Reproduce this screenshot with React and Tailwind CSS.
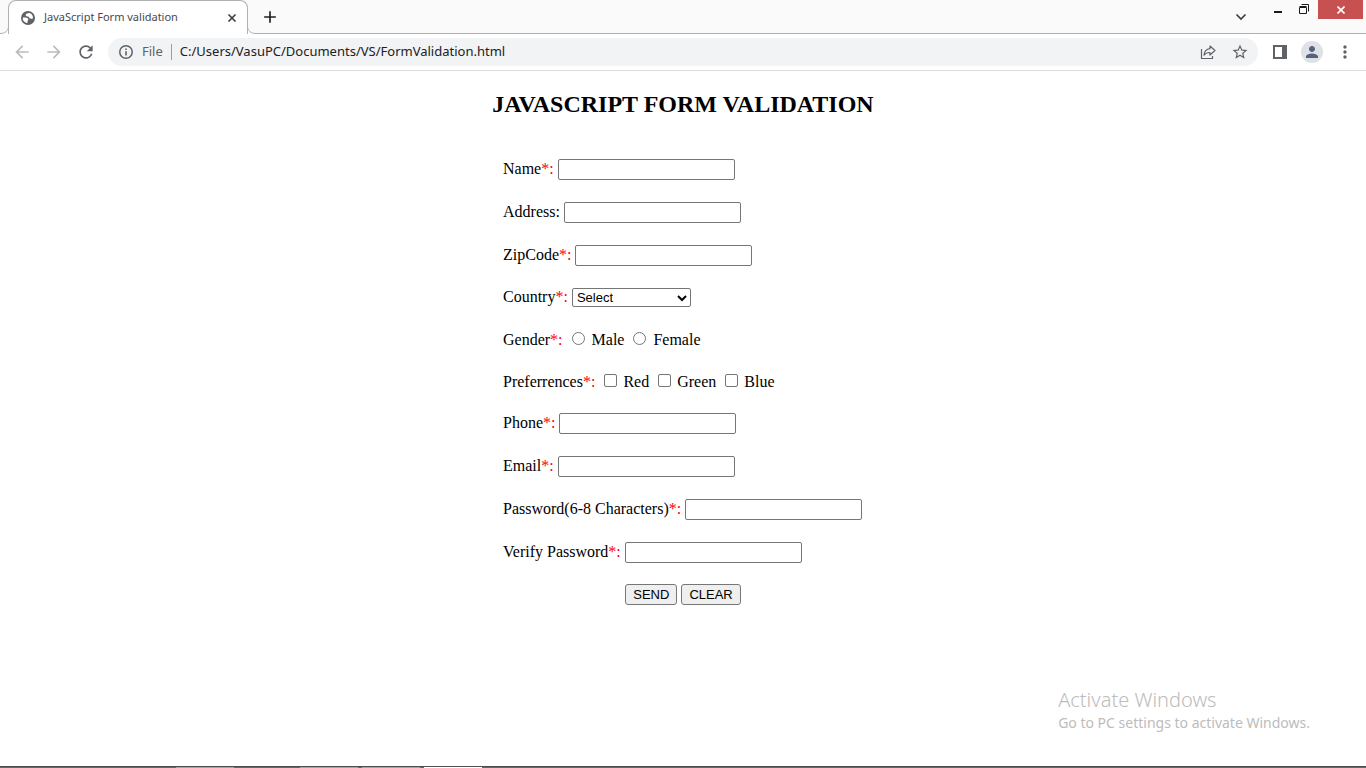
import React from "react";
import { MdArrowBack, MdArrowForward, MdRefresh, MdStarBorder, MdPerson, MdMoreVert, MdAdd } from "react-icons/md";

const UI = "font-['Noto_Sans','Open_Sans',sans-serif]";

function GlobeIcon() {
  return (
    <svg width="16" height="16" viewBox="0 0 16 16" aria-hidden="true">
      <circle cx="8" cy="8" r="7" fill="#5f6368" />
      <path d="M9.500 3C7.500 2.800 5.600 3.800 5.700 5.200c.1 1.200 1.600 1.100 2.500 1.400 1 .4.800 1.700 1.800 2 1.100.3 2.200.1 3-.4A5.300 5.300 0 0 0 9.500 3zM2.800 7.600c1.500-.1 3.200 0 4.400.5 1.300.5 1.500 1.700.7 2.400-.6.500-.4 1.200-.3 1.800.1.500-.2.800-.7.700A5.200 5.200 0 0 1 2.800 7.600z" fill="#fff" />
    </svg>
  );
}

function InfoIcon() {
  return (
    <svg width="16" height="16" viewBox="0 0 16 16" aria-hidden="true">
      <circle cx="8" cy="8" r="6.250" fill="none" stroke="#5f6368" strokeWidth="1.500" />
      <path d="M7.200 4.500h1.600v1.600H7.200zM7.200 7.200h1.600v4.300H7.200z" fill="#5f6368" />
    </svg>
  );
}

function ShareIcon() {
  return (
    <svg width="16" height="16" viewBox="0 0 16 16" fill="none" stroke="#5f6368" strokeWidth="1.200" aria-hidden="true">
      <path d="M1.500 5v9.500h11V12" />
      <path d="M10 2l5 4.500-5 4.500V8.500C7.500 8.400 5.500 9.200 4 11.200c.3-3.500 2.500-6.200 6-6.600z" strokeLinejoin="round" />
    </svg>
  );
}

function TabFlare({ flip }) {
  return (
    <svg width="8" height="34" viewBox="0 0 8 34" className={flip ? "-scale-x-100" : ""} aria-hidden="true">
      <path d="M0 33.500C5 33.500 8 31 8 26V34H0z" fill="#fff" />
      <path d="M0 33.500C5 33.500 8.500 31 8.500 26" fill="none" stroke="#b0b0b0" />
    </svg>
  );
}

function Star() {
  return <span className="text-[#ff0000]">*:</span>;
}

function TextRow({ id, label, required = true, type = "text" }) {
  return (
    <div className="flex h-[21px] items-center gap-1">
      <label htmlFor={id} className="pb-0.5">
        {label}
        {required ? <Star /> : ":"}
      </label>
      <input id={id} type={type} className="h-[21px] w-[177px] rounded-[2px] border border-[#767676] bg-white px-1 font-['Liberation_Sans',sans-serif] text-[13px]" />
    </div>
  );
}

function Choice({ type, name, label }) {
  const shape = type === "radio" ? "rounded-full gap-2" : "rounded-[2px]";
  const gap = type === "radio" ? "gap-[7px]" : "gap-1.5";
  return (
    <label className={`flex items-center ${gap}`}>
      <input type={type} name={name} className={`mb-1 h-[13px] w-[13px] appearance-none border border-[#767676] bg-white checked:bg-[#0075ff] ${shape}`} />
      {label}
    </label>
  );
}

function ChoiceRow({ id, label, children }) {
  return (
    <div role="group" aria-labelledby={id} className="flex h-5 items-center gap-[9px] pt-0.5">
      <span id={id}>{label}<Star /></span>
      {children}
    </div>
  );
}

function BrowserChrome() {
  return (
    <header className={UI}>
      <div className="flex h-[34px] bg-[#fafafa]">
        <TabFlare />
        <div className="flex w-60 items-center rounded-t-lg border border-b-0 border-[#b0b0b0] bg-white pr-[9px] pl-[11px]">
          <GlobeIcon />
          <span className="ml-2 flex-1 whitespace-nowrap text-[11px] text-[#45494d]">JavaScript Form validation</span>
          <button aria-label="Close tab">
            <svg width="12" height="12" viewBox="0 0 12 12" stroke="#3c4043" strokeWidth="1.700"><path d="M2.500 2.500l7 7M9.500 2.500l-7 7" /></svg>
          </button>
        </div>
        <TabFlare flip />
        <div className="flex flex-1 border-b border-[#b0b0b0]">
          <button aria-label="New tab" className="ml-1 text-[#202124]"><MdAdd size={20} /></button>
          <div className="ml-auto flex items-start">
            <button aria-label="Search tabs" className="mt-[11px] mr-[26px] text-[#3c4043]">
              <svg width="12" height="12" viewBox="0 0 12 12" fill="none" stroke="currentColor" strokeWidth="1.700"><path d="M1.500 3.500L6 8l4.500-4.500" /></svg>
            </button>
            <button aria-label="Minimize" className="mt-1 mr-4">
              <svg width="10" height="10" viewBox="0 0 10 10"><path d="M1 7h8v2H1z" fill="#1a1a1a" /></svg>
            </button>
            <button aria-label="Restore" className="mt-1 mr-[9px]">
              <svg width="10" height="10" viewBox="0 0 10 10" fill="none" stroke="#1a1a1a"><path d="M.5 3.500h7v6h-7zM.5 2.500h7M2.500 .5h7v7" /></svg>
            </button>
            <button aria-label="Close" className="mr-[3px] flex h-[19px] w-[45px] items-center justify-center bg-[#c75050]">
              <svg width="8" height="8" viewBox="0 0 8 8" stroke="#fff" strokeWidth="1.600"><path d="M.5 .5l7 7M7.500 .5l-7 7" /></svg>
            </button>
          </div>
        </div>
      </div>
      <div className="flex h-[37px] items-center border-b border-[#dadce0] bg-white pr-[11px] pl-3">
        <button aria-label="Back" className="text-[#babcbe]"><MdArrowBack size={20} /></button>
        <button aria-label="Forward" className="ml-3 text-[#babcbe]"><MdArrowForward size={20} /></button>
        <button aria-label="Reload" className="ml-3 text-[#5f6368]"><MdRefresh size={20} /></button>
        <div className="ml-3 flex h-7 flex-1 items-center rounded-full bg-[#f1f3f4] pr-[9px] pl-[10px]">
          <InfoIcon />
          <label htmlFor="url" className="ml-2 text-[13px] text-[#5f6368]">File</label>
          <span className="mx-2 h-4 w-px bg-[#9a9da1]" />
          <input id="url" defaultValue="C:/Users/VasuPC/Documents/VS/FormValidation.html" className="min-w-0 flex-1 bg-transparent text-[13px] text-[#202124] outline-none" />
          <button aria-label="Share"><ShareIcon /></button>
          <button aria-label="Bookmark" className="ml-[15px] text-[#5f6368]"><MdStarBorder size={18} /></button>
        </div>
        <button aria-label="Side panel" className="ml-[14px]">
          <svg width="16" height="16" viewBox="0 0 16 16"><path d="M1 1h14v14H1zM3 3v10h7V3z" fill="#5f6368" fillRule="evenodd" /></svg>
        </button>
        <button aria-label="Profile" className="ml-[13px] flex h-[22px] w-[22px] items-center justify-center rounded-full bg-[#dee1e6] text-[#56617a]"><MdPerson size={18} /></button>
        <button aria-label="Menu" className="ml-3 text-[#5f6368]"><MdMoreVert size={20} /></button>
      </div>
    </header>
  );
}

export default function App() {
  const btn = "h-[21px] rounded-[3px] border border-[#767676] bg-[#efefef] px-[7px] leading-none";
  return (
    <div className="relative flex min-h-screen flex-col bg-white">
      <BrowserChrome />
      <main className="flex flex-1 flex-col items-center pt-[19px] font-['Liberation_Serif',serif] text-[16px] leading-5 text-black">
        <h1 className="text-2xl leading-7 font-bold">JAVASCRIPT FORM VALIDATION</h1>
        <form className="mt-[41px] flex w-[360px] flex-col gap-[22px] whitespace-nowrap" onSubmit={(e) => e.preventDefault()}>
          <TextRow id="name" label="Name" />
          <TextRow id="address" label="Address" required={false} />
          <TextRow id="zip" label="ZipCode" />
          <div className="flex h-[19px] items-center gap-1">
            <label htmlFor="country" className="pb-0.5">Country<Star /></label>
            <div className="grid items-center">
              <select id="country" className="col-start-1 row-start-1 h-[19px] w-[119px] appearance-none rounded-[2px] border border-[#767676] bg-white pl-1 font-['Liberation_Sans',sans-serif] text-[13px] leading-none">
                <option>Select</option>
              </select>
              <svg width="10" height="8" viewBox="0 0 10 8" fill="none" stroke="#000" strokeWidth="2" className="pointer-events-none col-start-1 row-start-1 mr-1 justify-self-end" aria-hidden="true"><path d="M1 2l4 4 4-4" /></svg>
            </div>
          </div>
          <ChoiceRow id="gender" label="Gender">
            <Choice type="radio" name="gender" label="Male" />
            <Choice type="radio" name="gender" label="Female" />
          </ChoiceRow>
          <ChoiceRow id="preferences" label="Preferrences">
            <Choice type="checkbox" name="red" label="Red" />
            <Choice type="checkbox" name="green" label="Green" />
            <Choice type="checkbox" name="blue" label="Blue" />
          </ChoiceRow>
          <TextRow id="phone" label="Phone" />
          <TextRow id="email" label="Email" />
          <TextRow id="password" label="Password(6-8 Characters)" type="password" />
          <TextRow id="verify" label="Verify Password" type="password" />
          <div className="flex h-[19px] items-center justify-center gap-1 font-['Liberation_Sans',sans-serif] text-[13px]">
            <button type="submit" className={btn}>SEND</button>
            <button type="reset" className={btn}>CLEAR</button>
          </div>
        </form>
      </main>
      <aside className={`pointer-events-none absolute right-14 bottom-[34px] text-[#bcbcbc] ${UI}`}>
        <p className="text-[20px] leading-6 font-light">Activate Windows</p>
        <p className="text-[14px] leading-[22px]">Go to PC settings to activate Windows.</p>
      </aside>
      <footer className="flex h-[2px] border-t border-[#4d4d4f] bg-[#67676a] pl-44">
        <span className="h-px w-[58px] bg-[#a5a5a5]" />
        <span className="ml-[66px] h-px w-[58px] bg-[#a5a5a5]" />
        <span className="ml-1 h-px w-[58px] bg-[#a5a5a5]" />
        <span className="ml-1 h-px w-[58px] bg-white" />
      </footer>
    </div>
  );
}
